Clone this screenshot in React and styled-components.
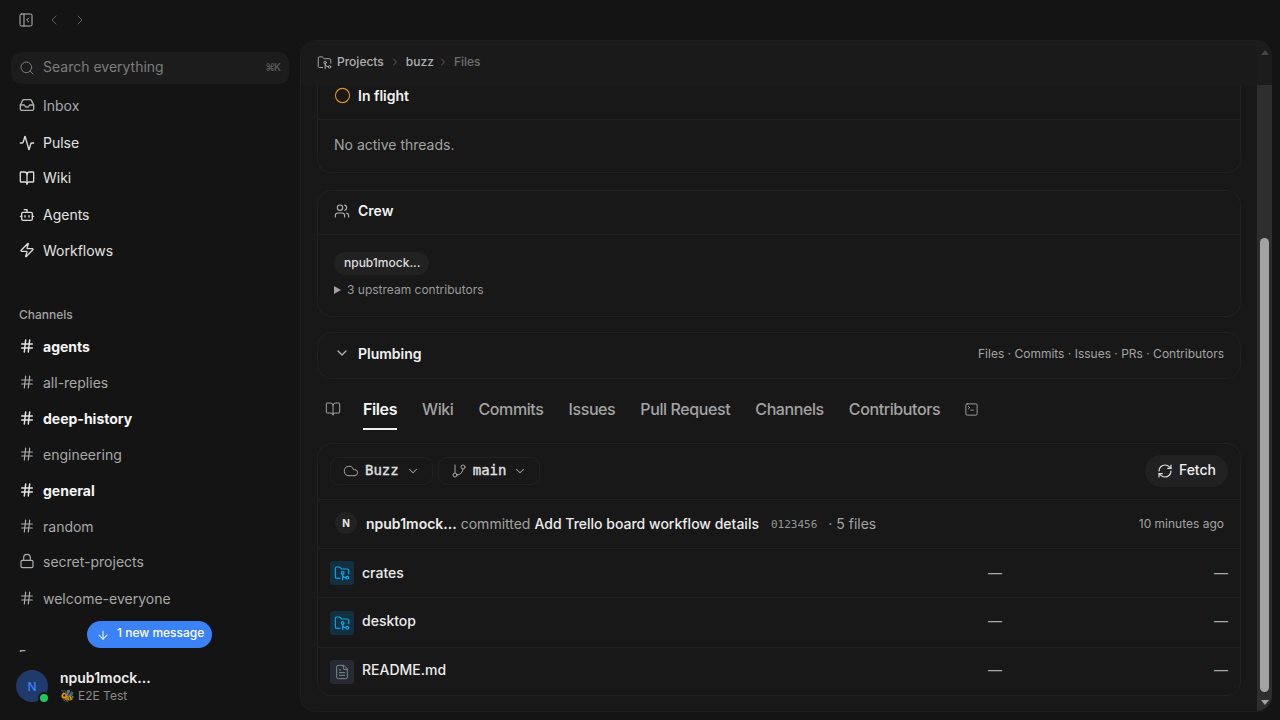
import React from "react";
import styled, { createGlobalStyle } from "styled-components";
import {
  PanelLeftClose, ChevronLeft, ChevronRight, ChevronDown, Search, Inbox, Activity, BookOpen, Bot, Zap, Circle,
  Hash, Lock, ArrowDown, FolderGit2, Users, Cloud, GitBranch, RefreshCw, FileText, SquareTerminal,
} from "lucide-react";

const Global = createGlobalStyle`
  html, body { margin: 0; padding: 0; height: 100%; background: #141414; overflow: hidden; }
  body { font-family: Inter, "Liberation Sans", sans-serif; color: #f2f2f2; }
  * { box-sizing: border-box; }
`;

const Page = styled.div`
  display: grid;
  grid-template-columns: 300px 972px;
  grid-template-rows: 40px 680px;
  width: 1280px;
  height: 720px;
  overflow: hidden;
`;
const TopBar = styled.div`
  grid-column: 1 / 3;
  display: flex;
  align-items: center;
  padding-left: 18px;
`;
const NavButton = styled.span`
  display: flex;
  margin-left: ${p => p.$gap || 0}px;
  color: ${p => p.$dim ? "#5e5e5e" : "#b8b8b8"};
`;
const Sidebar = styled.aside`
  position: relative;
  display: flex;
  flex-direction: column;
  min-height: 0;
`;
const SideScroll = styled.div`
  height: 612px;
  overflow: hidden;
  padding: 12px 11px 0 11px;
  flex: none;
`;
const SearchBox = styled.div`
  display: flex;
  align-items: center;
  height: 32px;
  border-radius: 10px;
  background: #1c1c1c;
  padding: 0 9px 4px 8px;
  color: #7c7c7c;
  font-size: 14px;
  gap: 8px;
  margin-bottom: 3px;
  svg { margin-top: 4px; }
`;
const Kbd = styled.span`
  margin-left: auto;
  font-size: 10px;
  color: #5f5f5f;
  font-weight: 500;
  letter-spacing: -1px;
  margin-top: 2px;
`;
const NavRow = styled.div`
  display: flex;
  align-items: center;
  height: ${p => p.$h || 36}px;
  padding: ${p => p.$up ? "0 0 2px 8px" : p.$down ? "2px 0 0 8px" : "0 0 0 8px"};
  gap: 8px;
  font-size: 14px;
  font-weight: ${p => p.$bold ? 700 : 400};
  color: ${p => p.$bold ? "#f5f5f5" : p.$muted ? "#a8a8a8" : "#e2e2e2"};
  svg { flex: none; color: ${p => p.$bold ? "#e5e5e5" : p.$muted ? "#b0b0b0" : "#dcdcdc"}; }
`;
const SectionLabel = styled.div`
  margin: ${p => p.$mt}px 0 -2px;
  height: 32px;
  display: flex;
  align-items: center;
  padding-left: 8px;
  font-size: 12px;
  font-weight: 500;
  color: #a3a3a3;
`;
const NewPill = styled.div`
  position: absolute;
  left: 87px;
  top: 581px;
  width: 125px;
  height: 27px;
  border-radius: 14px;
  background: #3b82f6;
  color: #fff;
  font-size: 12px;
  font-weight: 500;
  display: flex;
  align-items: center;
  padding: 0 0 4px 9px;
  gap: 7px;
  svg { margin-top: 4px; }
`;
const Footer = styled.div`
  display: flex;
  align-items: center;
  padding: 0 0 0 16px;
  gap: 12px;
  height: 68px;
`;
const Avatar = styled.div`
  position: relative;
  width: 32px;
  height: 32px;
  border-radius: 50%;
  background: #1f3a6b;
  color: #3b82f6;
  font-size: 12px;
  font-weight: 500;
  display: flex;
  align-items: center;
  justify-content: center;
`;
const Presence = styled.span`
  position: absolute;
  right: -2px;
  bottom: -2px;
  width: 12px;
  height: 12px;
  border-radius: 50%;
  background: #22c55e;
  border: 2px solid #141414;
`;
const UserName = styled.div`
  font-size: 14px;
  font-weight: 600;
  color: #ececec;
  line-height: 20px;
`;
const UserStatus = styled.div`
  display: flex;
  align-items: center;
  gap: 3px;
  font-size: 12px;
  color: #8a8a8a;
  line-height: 16px;
`;
const Bee = styled.span`
  font-size: 12px;
  opacity: 0.8;
  line-height: 16px;
`;
const Panel = styled.main`
  display: flex;
  background: #181818;
  border: 1px solid #1f1f1f;
  border-right: none;
  border-radius: 16px;
  overflow: hidden;
  min-height: 0;
  margin-bottom: 8px;
`;
const Column = styled.div`
  flex: 1;
  min-width: 0;
  display: flex;
  flex-direction: column;
`;
const Crumbs = styled.header`
  height: 44px;
  flex: none;
  display: flex;
  align-items: center;
  padding: 0 0 3px 16px;
  font-size: 12px;
  font-weight: 500;
  color: #b0b0b0;
  gap: 5px;
  background: #1a1a1a;
  svg { margin-top: 1px; }
`;
const CrumbSep = styled.span`
  display: flex;
  color: #5f5f5f;
  margin-left: ${p => p.$shift || 0}px;
`;
const CrumbCurrent = styled.span`
  color: #6e6e6e;
`;
const Body = styled.div`
  flex: 1;
  min-height: 0;
  padding: 0 16px;
  display: flex;
  flex-direction: column;
`;
const Card = styled.section`
  border: 1px solid #212121;
  border-radius: 14px;
  margin-bottom: ${p => p.$mb ?? 16}px;
  ${p => p.$cut && "border-top: none; border-top-left-radius: 0; border-top-right-radius: 0;"}
`;
const CardHead = styled.div`
  height: ${p => p.$h || 45}px;
  display: flex;
  align-items: center;
  padding: 0 16px ${p => p.$pb || 0}px;
  gap: 8px;
  font-size: 14px;
  font-weight: 600;
  color: #f2f2f2;
  ${p => p.$line && "border-bottom: 1px solid #212121;"}
  svg { color: #b0b0b0; flex: none; }
`;
const Ring = styled(Circle)`
  && { color: #d9961a; margin-right: -1px; }
`;
const EmptyText = styled.div`
  padding: 16px 16px 0;
  height: 52px;
  font-size: 14px;
  line-height: 17px;
  color: #a3a3a3;
`;
const CrewBody = styled.div`
  padding: 17px 16px 0;
  height: 81px;
`;
const Chip = styled.div`
  display: flex;
  align-items: center;
  width: 95px;
  height: 23px;
  padding: 0 10px 2px;
  border-radius: 12px;
  background: #212121;
  color: #dedede;
  font-size: 12px;
  font-weight: 500;
  white-space: nowrap;
`;
const Upstream = styled.div`
  display: flex;
  align-items: center;
  gap: 5px;
  margin-top: 7px;
  font-size: 12px;
  line-height: 16px;
  color: #9a9a9a;
`;
const Triangle = styled.span`
  width: 0;
  height: 0;
  border-left: 7px solid #a0a0a0;
  border-top: 4px solid transparent;
  border-bottom: 4px solid transparent;
  margin-right: 1px;
`;
const HeadLinks = styled.span`
  margin-left: auto;
  font-size: 12px;
  font-weight: 400;
  color: #a3a3a3;
`;
const Tabs = styled.nav`
  display: flex;
  align-items: stretch;
  height: 35px;
  margin: 0 0 13px;
  padding-left: 8px;
  gap: 25px;
  font-size: 16px;
  font-weight: 500;
  letter-spacing: -0.4px;
  color: #a3a3a3;
`;
const Tab = styled.span`
  display: flex;
  align-items: center;
  padding-bottom: 7px;
  ${p => p.$icon && "margin-right: -3px;"}
  ${p => p.$end && "margin-left: -1px;"}
  ${p => p.$active && "color: #f5f5f5; font-weight: 600; box-shadow: inset 0 -2px 0 #f0f0f0;"}
`;
const Toolbar = styled.div`
  height: 56px;
  display: flex;
  align-items: center;
  padding: 0 12px 2px;
  gap: 5px;
  border-bottom: 1px solid #212121;
`;
const Select = styled.span`
  display: flex;
  align-items: center;
  height: 28px;
  padding: 0 12px 2px;
  gap: 6px;
  border: 1px solid #212121;
  border-radius: 9px;
  font-family: "DejaVu Sans Mono", "Liberation Mono", monospace;
  font-size: 14px;
  font-weight: 400;
  -webkit-text-stroke: 0.35px #e0e0e0;
  color: #e0e0e0;
  svg { color: #a3a3a3; flex: none; margin-top: 2px; }
  svg:last-child { margin-left: 1px; }
`;
const FetchButton = styled.span`
  margin-left: auto;
  display: flex;
  align-items: center;
  gap: 6px;
  height: 32px;
  padding: 0 12px 2px;
  border-radius: 16px;
  background: #212121;
  font-size: 14px;
  font-weight: 500;
  color: #f0f0f0;
  svg { color: #e0e0e0; margin-top: 2px; }
`;
const CommitRow = styled.div`
  height: 49px;
  display: flex;
  align-items: center;
  padding: 0 16px 2px;
  font-size: 14px;
  border-bottom: 1px solid #212121;
  color: #a3a3a3;
`;
const SmallAvatar = styled.span`
  width: 22px;
  height: 22px;
  border-radius: 50%;
  background: #222;
  color: #e8e8e8;
  font-size: 10px;
  font-weight: 700;
  display: flex;
  align-items: center;
  justify-content: center;
  margin: 0 9px 0 1px;
`;
const Author = styled.span`
  font-weight: 600;
  color: #ececec;
  margin-right: 4px;
`;
const Title = styled.span`
  font-weight: 500;
  color: #ececec;
  margin-left: 4px;
`;
const Sha = styled.span`
  font-family: "DejaVu Sans Mono", "Liberation Mono", monospace;
  font-size: 11px;
  color: #969696;
  margin: 2px 11px 0 12px;
`;
const When = styled.span`
  margin-left: auto;
  font-size: 12px;
  color: #a3a3a3;
`;
const FileRow = styled.div`
  height: ${p => p.$h}px;
  display: flex;
  align-items: center;
  padding-left: 12px;
  font-size: 14px;
  font-weight: 500;
  color: #ececec;
  ${p => !p.$last && "border-bottom: 1px solid #212121;"}
`;
const FileIcon = styled.span`
  width: 24px;
  height: 24px;
  border-radius: 3px;
  background: ${p => p.$dir ? "#12303f" : "#272a31"};
  color: ${p => p.$dir ? "#0ea5e9" : "#7f8694"};
  display: flex;
  align-items: center;
  justify-content: center;
  margin-right: 8px;
`;
const FileName = styled.span`
  margin-bottom: ${p => p.$lift}px;
`;
const Dash = styled.span`
  margin-left: ${p => p.$first ? "auto" : "212px"};
  margin-right: ${p => p.$first ? 0 : 12}px;
  margin-bottom: ${p => p.$lift}px;
  font-weight: 400;
  color: #a8a8a8;
`;
const ScrollTrack = styled.div`
  width: 15px;
  flex: none;
  background: #2e2e2e;
  display: flex;
  flex-direction: column;
  align-items: center;
`;
const ScrollHeadCover = styled.div`
  width: 100%;
  height: 44px;
  background: #1c1c1c;
  display: flex;
  justify-content: center;
  padding-top: 9px;
  flex: none;
`;
const ArrowUp = styled.span`
  width: 0;
  height: 0;
  border-left: 4px solid transparent;
  border-right: 4px solid transparent;
  border-bottom: 5px solid #444;
`;
const Thumb = styled.div`
  width: 9px;
  height: 454px;
  margin-top: 153px;
  border-radius: 5px;
  background: #a3a3a3;
  flex: none;
`;
const ArrowDn = styled.span`
  margin-top: 8px;
  width: 0;
  height: 0;
  border-left: 4px solid transparent;
  border-right: 4px solid transparent;
  border-top: 5px solid #a3a3a3;
`;

const nav = [
  { Icon: Inbox, label: "Inbox", h: 36, muted: true },
  { Icon: Activity, label: "Pulse", h: 37, down: true },
  { Icon: BookOpen, label: "Wiki", h: 35 },
  { Icon: Bot, label: "Agents", h: 37, down: true },
  { Icon: Zap, label: "Workflows", h: 36 },
];
const channels = [
  [Hash, "agents", true], [Hash, "all-replies"], [Hash, "deep-history", true], [Hash, "engineering"],
  [Hash, "general", true], [Hash, "random"], [Lock, "secret-projects", false, true], [Hash, "welcome-everyone"],
];
const tabs = ["Files", "Wiki", "Commits", "Issues", "Pull Request", "Channels", "Contributors"];
const files = [["crates", true, 49, 2], ["desktop", true, 50, 4], ["README.md", false, 47, 4]];

export default function App() {
  return (
    <Page>
      <Global />
      <TopBar>
        <NavButton><PanelLeftClose size={16} strokeWidth={1.5} /></NavButton>
        <NavButton $dim $gap={12}><ChevronLeft size={16} strokeWidth={1.5} /></NavButton>
        <NavButton $dim $gap={10}><ChevronRight size={16} strokeWidth={1.5} /></NavButton>
      </TopBar>
      <Sidebar>
        <SideScroll>
          <SearchBox><Search size={16} strokeWidth={1.5} />Search everything<Kbd>⌘K</Kbd></SearchBox>
          {nav.map(({ Icon, label, h, muted, down }) => (
            <NavRow key={label} $h={h} $muted={muted} $down={down}><Icon size={16} strokeWidth={2} />{label}</NavRow>
          ))}
          <SectionLabel $mt={30}>Channels</SectionLabel>
          {channels.map(([Icon, label, bold, up]) => (
            <NavRow key={label} $bold={bold} $muted $up={up}><Icon size={16} strokeWidth={bold ? 2.25 : 1.75} />{label}</NavRow>
          ))}
          <SectionLabel $mt={22}>Forums</SectionLabel>
        </SideScroll>
        <NewPill><ArrowDown size={14} strokeWidth={1.75} />1 new message</NewPill>
        <Footer>
          <Avatar>N<Presence /></Avatar>
          <div>
            <UserName>npub1mock...</UserName>
            <UserStatus><Bee>🐝</Bee>E2E Test</UserStatus>
          </div>
        </Footer>
      </Sidebar>
      <Panel>
        <Column>
          <Crumbs>
            <FolderGit2 size={15} strokeWidth={1.5} />
            Projects<CrumbSep><ChevronRight size={12} /></CrumbSep>buzz<CrumbSep $shift={-2}><ChevronRight size={12} /></CrumbSep>
            <CrumbCurrent>Files</CrumbCurrent>
          </Crumbs>
          <Body>
            <Card $cut $mb={17}>
              <CardHead $line $h={35} $pb={14}><Ring size={17} strokeWidth={1.6} />In flight</CardHead>
              <EmptyText>No active threads.</EmptyText>
            </Card>
            <Card $mb={15}>
              <CardHead $line $h={44} $pb={4}><Users size={16} strokeWidth={1.75} />Crew</CardHead>
              <CrewBody>
                <Chip>npub1mock...</Chip>
                <Upstream><Triangle />3 upstream contributors</Upstream>
              </CrewBody>
            </Card>
            <Card>
              <CardHead $pb={5}><ChevronDown size={16} />Plumbing<HeadLinks>Files · Commits · Issues · PRs · Contributors</HeadLinks></CardHead>
            </Card>
            <Tabs>
              <Tab $icon><BookOpen size={16} strokeWidth={1.5} /></Tab>
              {tabs.map((t, i) => <Tab key={t} $active={i === 0}>{t}</Tab>)}
              <Tab $end><SquareTerminal size={15} strokeWidth={1.5} /></Tab>
            </Tabs>
            <Card $mb={0}>
              <Toolbar>
                <Select><Cloud size={16} strokeWidth={1.5} />Buzz<ChevronDown size={14} strokeWidth={1.75} /></Select>
                <Select><GitBranch size={16} strokeWidth={1.5} />main<ChevronDown size={14} strokeWidth={1.75} /></Select>
                <FetchButton><RefreshCw size={16} strokeWidth={1.75} />Fetch</FetchButton>
              </Toolbar>
              <CommitRow>
                <SmallAvatar>N</SmallAvatar>
                <Author>npub1mock...</Author>committed<Title>Add Trello board workflow details</Title>
                <Sha>0123456</Sha>· 5 files
                <When>10 minutes ago</When>
              </CommitRow>
              {files.map(([name, dir, h, lift], i) => (
                <FileRow key={name} $h={h} $last={i === 2}>
                  <FileIcon $dir={dir}>{dir ? <FolderGit2 size={16} strokeWidth={1.75} /> : <FileText size={16} strokeWidth={1.5} />}</FileIcon>
                  <FileName $lift={lift}>{name}</FileName>
                  <Dash $first $lift={lift}>—</Dash><Dash $lift={lift}>—</Dash>
                </FileRow>
              ))}
            </Card>
          </Body>
        </Column>
        <ScrollTrack>
          <ScrollHeadCover><ArrowUp /></ScrollHeadCover>
          <Thumb />
          <ArrowDn />
        </ScrollTrack>
      </Panel>
    </Page>
  );
}
